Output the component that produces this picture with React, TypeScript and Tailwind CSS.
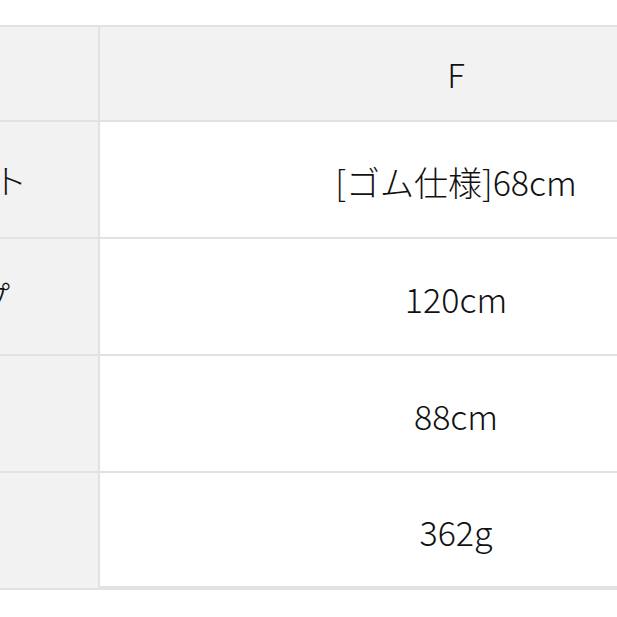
const rows = [
  { label: "", value: "F", head: true },
  { label: "ウエスト", value: "[ゴム仕様]68cm" },
  { label: "ヒップ", value: "120cm" },
  { label: "総丈", value: "88cm" },
  { label: "重さ", value: "362g" },
];

export default function App() {
  return (
    <div
      className="h-[617px] w-[617px] overflow-hidden bg-white pt-[25px] text-[34px] font-light text-[#111]"
      style={{ fontFamily: '"Noto Sans CJK JP", "Noto Sans", sans-serif' }}
    >
      {rows.map((r, i) => {
        const last = i === rows.length - 1;
        return (
          <div
            key={r.value}
            className={`flex ${r.head ? "h-[97px] border-t-2 border-[#e2e2e2]" : "h-[117px]"}`}
          >
            <div className="flex w-[100px] shrink-0 items-center justify-end overflow-hidden border-r-2 border-b-2 border-[#e2e2e2] bg-[#f2f2f2]">
              <div className="w-[278px] shrink-0 text-center leading-none">{r.label}</div>
            </div>
            <div
              className={`flex w-[712px] shrink-0 items-center justify-center leading-none ${
                r.head ? "bg-[#f2f2f2]" : "bg-white"
              } ${last ? "border-b-4" : "border-b-2"} border-[#e2e2e2]`}
            >
              <span className={r.head ? "pt-[2px] text-[33px]" : "pt-[4px]"}>{r.value}</span>
            </div>
          </div>
        );
      })}
    </div>
  );
}
